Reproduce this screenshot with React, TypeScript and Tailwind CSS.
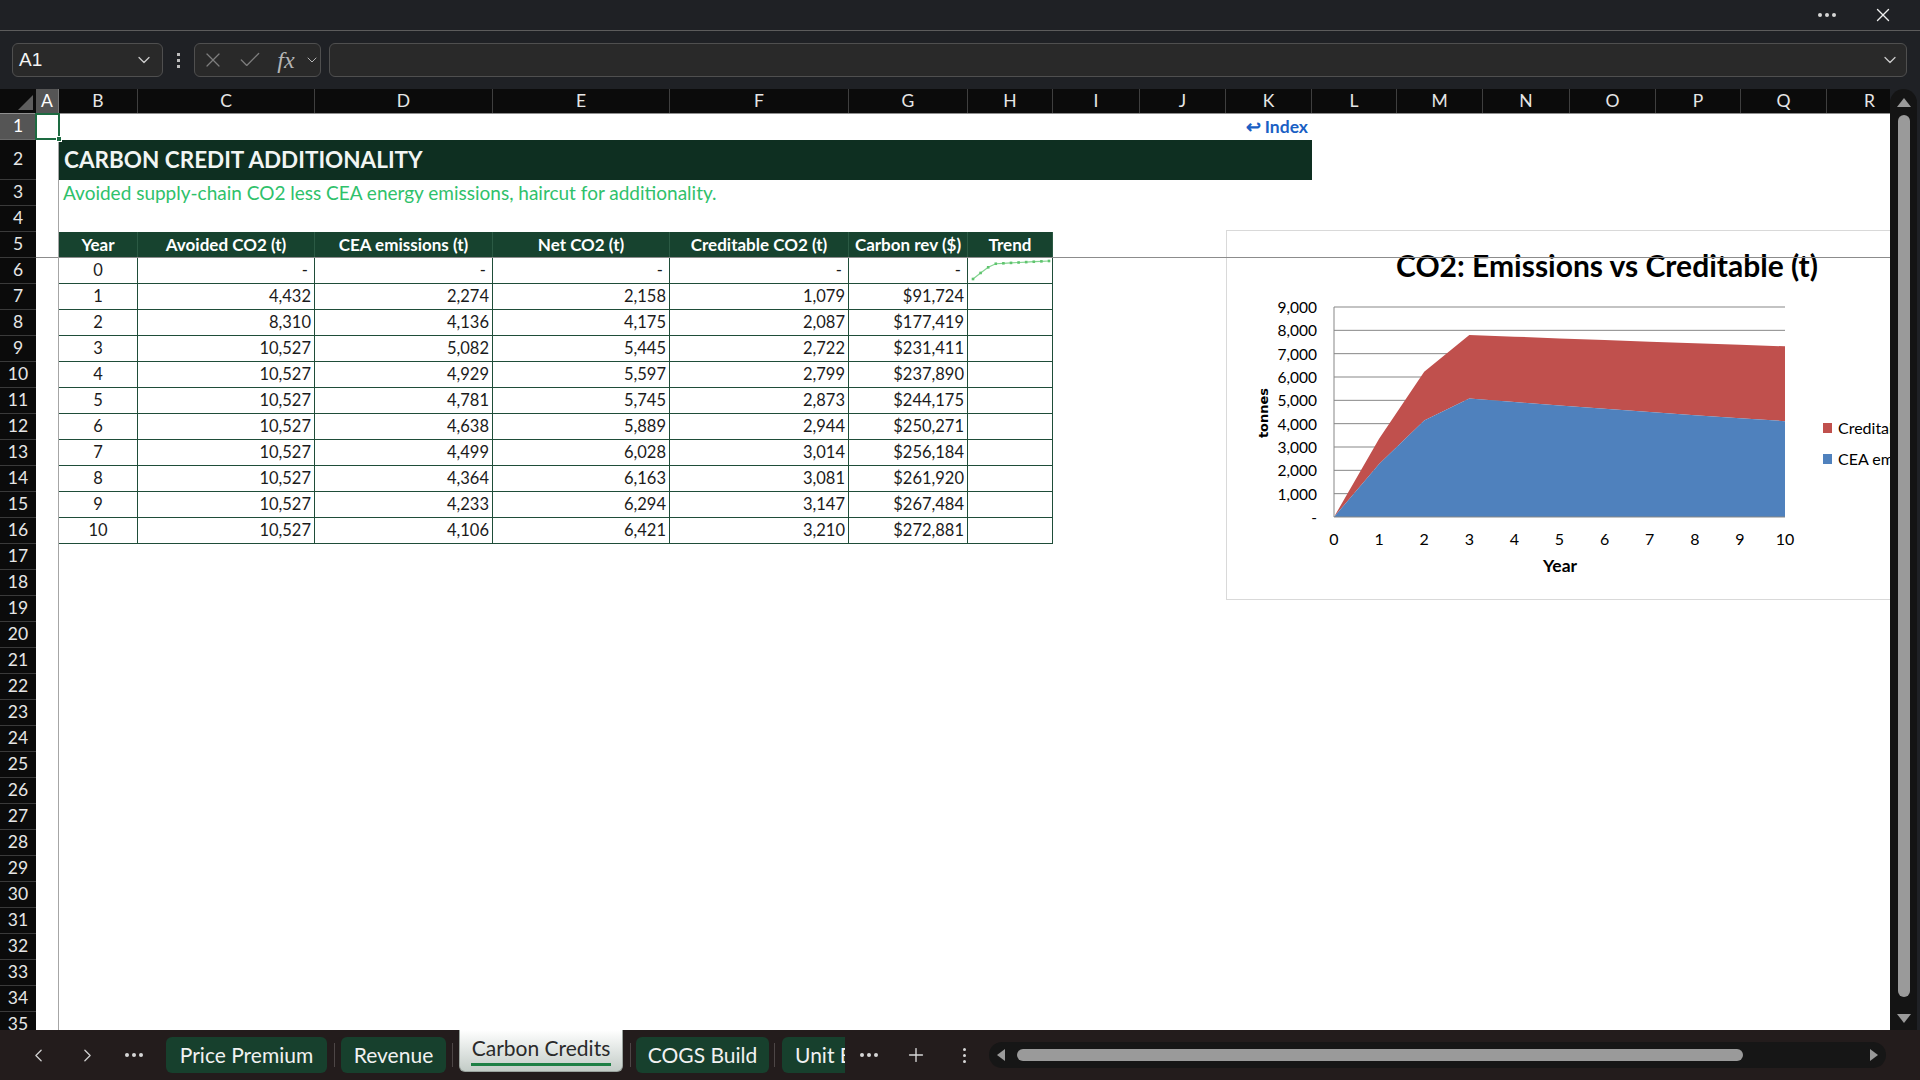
import React from 'react';
import { X, Check, ChevronDown, ChevronLeft, ChevronRight, Plus } from 'lucide-react';

const COLS = [
  { k: 'A', w: 'w-[23px]' },
  { k: 'B', w: 'w-[79px]' },
  { k: 'C', w: 'w-[177px]' },
  { k: 'D', w: 'w-[178px]' },
  { k: 'E', w: 'w-[177px]' },
  { k: 'F', w: 'w-[179px]' },
  { k: 'G', w: 'w-[119px]' },
  { k: 'H', w: 'w-[85px]' },
  { k: 'I', w: 'w-[87px]' },
  { k: 'J', w: 'w-[86px]' },
  { k: 'K', w: 'w-[86px]' },
  { k: 'L', w: 'w-[85px]' },
  { k: 'M', w: 'w-[86px]' },
  { k: 'N', w: 'w-[87px]' },
  { k: 'O', w: 'w-[86px]' },
  { k: 'P', w: 'w-[85px]' },
  { k: 'Q', w: 'w-[86px]' },
  { k: 'R', w: 'w-[86px]' },
];

const DATA: string[][] = [
  ['0', '-', '-', '-', '-', '-'],
  ['1', '4,432', '2,274', '2,158', '1,079', '$91,724'],
  ['2', '8,310', '4,136', '4,175', '2,087', '$177,419'],
  ['3', '10,527', '5,082', '5,445', '2,722', '$231,411'],
  ['4', '10,527', '4,929', '5,597', '2,799', '$237,890'],
  ['5', '10,527', '4,781', '5,745', '2,873', '$244,175'],
  ['6', '10,527', '4,638', '5,889', '2,944', '$250,271'],
  ['7', '10,527', '4,499', '6,028', '3,014', '$256,184'],
  ['8', '10,527', '4,364', '6,163', '3,081', '$261,920'],
  ['9', '10,527', '4,233', '6,294', '3,147', '$267,484'],
  ['10', '10,527', '4,106', '6,421', '3,210', '$272,881'],
];

const CEA = [0, 2274, 4136, 5082, 4929, 4781, 4638, 4499, 4364, 4233, 4106];
const CRED = [0, 1079, 2087, 2722, 2799, 2873, 2944, 3014, 3081, 3147, 3210];

function RowHead({ n, active }: { n: number; active?: boolean }) {
  return (
    <div
      className={
        'w-[36px] shrink-0 h-full border-b flex items-center justify-center text-[17.5px] ' +
        (active ? 'bg-[#555555] text-white border-[#6a6a6a]' : 'bg-[#0b0b0b] text-[#e6e6e6] border-[#3a3a3a]')
      }
    >
      {n}
    </div>
  );
}

function Row({ n, tall, active, children }: { n: number; tall?: boolean; active?: boolean; children?: React.ReactNode }) {
  return (
    <div className={'flex shrink-0 ' + (tall ? 'h-[40px]' : 'h-[26px]')}>
      <RowHead n={n} active={active} />
      <div className="flex-1 h-full bg-white flex">{children}</div>
    </div>
  );
}

function Sparkline() {
  const pts = CRED.map((v, i) => [5 + i * 7.6, 21 - (v / 3210) * 18]);
  return (
    <svg width="84" height="25" viewBox="0 0 84 25" className="block">
      <polyline points={pts.map((p) => p.join(',')).join(' ')} fill="none" stroke="#82d48f" strokeWidth="1.2" />
      {pts.map((p, i) => (
        <rect key={i} x={p[0] - 1.3} y={p[1] - 1.3} width="2.6" height="2.6" fill="#5fc46e" />
      ))}
    </svg>
  );
}

function Chart() {
  const px = (i: number) => 107 + i * 45.1;
  const py = (v: number) => 286 - (v * 210) / 9000;
  const blue = CEA.map((v, i) => `${px(i)},${py(v)}`);
  const top = CEA.map((v, i) => `${px(i)},${py(v + CRED[i])}`);
  const bluePoly = [`${px(0)},286`, ...blue, `${px(10)},286`].join(' ');
  const redPoly = [...top, ...blue.slice().reverse()].join(' ');
  return (
    <div className="absolute left-[1226px] top-[141px] w-[760px] h-[370px] bg-white border border-[#d9d9d9] z-10">
      <svg width="760" height="370" viewBox="0 0 760 370" className="absolute left-0 top-0">
        {[1, 2, 3, 4, 5, 6, 7, 8, 9].map((v) => (
          <line key={v} x1="107" x2="558" y1={py(v * 1000)} y2={py(v * 1000)} stroke="#878787" strokeWidth="1" />
        ))}
        <polygon points={redPoly} fill="#c0504d" />
        <polygon points={bluePoly} fill="#4f81bd" />
        <line x1="107" x2="107" y1="76" y2="286" stroke="#878787" strokeWidth="1" />
        <line x1="107" x2="558" y1="286" y2="286" stroke="#878787" strokeWidth="1" />
        {[0, 1, 2, 3, 4, 5, 6, 7, 8, 9].map((v) => (
          <text key={v} x="90" y={py(v * 1000)} textAnchor="end" dominantBaseline="central" fontFamily="Lato, sans-serif" fontSize="15.5" fill="#000">
            {v === 0 ? '-' : `${v},000`}
          </text>
        ))}
        {[0, 1, 2, 3, 4, 5, 6, 7, 8, 9, 10].map((i) => (
          <text key={i} x={px(i)} y="307" textAnchor="middle" dominantBaseline="central" fontFamily="Lato, sans-serif" fontSize="16" fill="#000">
            {i}
          </text>
        ))}
        <text x="333" y="334" textAnchor="middle" dominantBaseline="central" fontFamily="Lato, sans-serif" fontWeight="700" fontSize="17.5" fill="#000">
          Year
        </text>
        <text x="36" y="182" textAnchor="middle" dominantBaseline="central" fontFamily="DejaVu Sans, sans-serif" fontWeight="700" fontSize="13" fill="#000" transform="rotate(-90 36 182)">
          tonnes
        </text>
      </svg>
      <div className="absolute left-0 w-[760px] top-[16px] flex justify-center">
        <span className="text-[30px] font-bold text-black leading-[36px] whitespace-nowrap">CO2: Emissions vs Creditable (t)</span>
      </div>
      <div className="absolute left-[596px] top-[187px] flex flex-col gap-[11px]">
        <div className="flex items-center gap-[6px] h-[20px]">
          <div className="w-[9px] h-[10px] bg-[#c0504d]" />
          <span className="text-[16px] text-black whitespace-nowrap">Creditable CO2 (t)</span>
        </div>
        <div className="flex items-center gap-[6px] h-[20px]">
          <div className="w-[9px] h-[10px] bg-[#4f81bd]" />
          <span className="text-[16px] text-black whitespace-nowrap">CEA emissions (t)</span>
        </div>
      </div>
    </div>
  );
}

const HEADERS = ['Year', 'Avoided CO2 (t)', 'CEA emissions (t)', 'Net CO2 (t)', 'Creditable CO2 (t)', 'Carbon rev ($)', 'Trend'];
const TW = ['w-[79px]', 'w-[177px]', 'w-[178px]', 'w-[177px]', 'w-[179px]', 'w-[119px]', 'w-[85px]'];

function Sheet() {
  const rows: React.ReactNode[] = [];
  rows.push(
    <Row key={1} n={1} active>
      <div className="w-[23px] shrink-0" />
      <div className="w-[1253px] shrink-0 flex items-center justify-end pr-[4px] text-[#1a5fc4] font-bold text-[17.5px]">
        ↩ Index
      </div>
    </Row>
  );
  rows.push(
    <Row key={2} n={2} tall>
      <div className="w-[23px] shrink-0" />
      <div className="w-[1253px] shrink-0 h-full bg-[#0e2f21] flex items-center pl-[5px] text-[#f2f5f3] font-bold text-[22.5px]">
        CARBON CREDIT ADDITIONALITY
      </div>
    </Row>
  );
  rows.push(
    <Row key={3} n={3}>
      <div className="w-[23px] shrink-0" />
      <div className="flex items-center pl-[4px] text-[#2fc16b] text-[19px] whitespace-nowrap">
        Avoided supply-chain CO2 less CEA energy emissions, haircut for additionality.
      </div>
    </Row>
  );
  rows.push(<Row key={4} n={4} />);
  rows.push(
    <Row key={5} n={5}>
      <div className="w-[23px] shrink-0" />
      {HEADERS.map((h, i) => (
        <div
          key={h}
          className={TW[i] + ' shrink-0 h-full bg-[#17432f] border-r border-[#2b5a44] flex items-center justify-center text-white font-bold text-[17px] whitespace-nowrap'}
        >
          {h}
        </div>
      ))}
    </Row>
  );
  DATA.forEach((d, r) => {
    rows.push(
      <Row key={6 + r} n={6 + r}>
        <div className="w-[23px] shrink-0" />
        {d.map((v, i) => (
          <div
            key={i}
            className={
              TW[i] +
              ' shrink-0 h-full border-r border-b border-[#1f4d39] flex items-center text-[#1b1b1b] text-[16.5px] ' +
              (i === 0 ? 'justify-center' : v === '-' ? 'justify-end pr-[6px]' : 'justify-end pr-[3px]')
            }
          >
            {v}
          </div>
        ))}
        <div className="w-[85px] shrink-0 h-full border-r border-b border-[#1f4d39] flex items-center">{r === 0 ? <Sparkline /> : null}</div>
      </Row>
    );
  });
  for (let n = 17; n <= 35; n++) rows.push(<Row key={n} n={n} />);

  return (
    <div className="relative w-[1890px] h-[941px] overflow-hidden bg-white shrink-0">
      <div className="flex h-[25px] bg-[#0b0b0b] border-b border-[#8f8f8f] box-border">
        <div className="w-[36px] shrink-0 relative">
          <div className="absolute right-[3px] bottom-[3px] w-0 h-0 border-l-[15px] border-l-transparent border-b-[15px] border-b-[#5e5e5e]" />
        </div>
        {COLS.map((c) => (
          <div
            key={c.k}
            className={
              c.w +
              ' shrink-0 h-full flex items-center justify-center text-[17.5px] border-r ' +
              (c.k === 'A' ? 'bg-[#555555] text-white border-[#777777]' : 'text-[#e6e6e6] border-[#3f3f3f]')
            }
          >
            {c.k}
          </div>
        ))}
      </div>
      {rows}
      <Chart />
      <div className="absolute left-[36px] right-0 top-[168px] h-px bg-[#8c8c8c] z-20" />
      <div className="absolute left-[58px] top-[25px] bottom-0 w-px bg-[#a6a6a6] z-20" />
      <div className="absolute left-[35px] top-[24px] w-[25px] h-[27px] border-2 border-[#1d6b41] z-30">
        <div className="absolute right-[-4px] bottom-[-4px] w-[6px] h-[6px] bg-[#1d6b41] border border-white" />
      </div>
    </div>
  );
}

function VScroll() {
  return (
    <div className="w-[30px] h-[941px] shrink-0 bg-[#1f2125] flex justify-start">
      <div className="w-[27px] h-full bg-[#141414] rounded-t-[14px] flex flex-col items-center pt-[9px]">
        <div className="w-0 h-0 border-l-[7px] border-l-transparent border-r-[7px] border-r-transparent border-b-[9px] border-b-[#9a9a9a]" />
        <div className="w-[12px] h-[882px] mt-[8px] bg-[#9a9a9a] rounded-full" />
        <div className="mt-[17px] w-0 h-0 border-l-[7px] border-l-transparent border-r-[7px] border-r-transparent border-t-[9px] border-t-[#9a9a9a]" />
      </div>
    </div>
  );
}

function Tab({ label, w }: { label: string; w: string }) {
  return (
    <div className={w + ' shrink-0 h-[36px] bg-[#17402d] rounded-[6px] flex items-center justify-center text-[21px] text-[#f1f1f1] whitespace-nowrap'}>
      {label}
    </div>
  );
}

function Sep() {
  return <div className="w-px h-[24px] bg-[#4d4646] shrink-0" />;
}

function Dots() {
  return (
    <div className="flex gap-[3px]">
      <div className="w-[4px] h-[4px] rounded-full bg-[#d6d6d6]" />
      <div className="w-[4px] h-[4px] rounded-full bg-[#d6d6d6]" />
      <div className="w-[4px] h-[4px] rounded-full bg-[#d6d6d6]" />
    </div>
  );
}

function TabBar() {
  return (
    <div className="h-[50px] bg-[#231c1c] flex items-center shrink-0">
      <div className="w-[26px] shrink-0" />
      <div className="w-[24px] flex justify-center text-[#cfcfcf]"><ChevronLeft size={21} strokeWidth={1.5} /></div>
      <div className="w-[25px] shrink-0" />
      <div className="w-[24px] flex justify-center text-[#cfcfcf]"><ChevronRight size={21} strokeWidth={1.5} /></div>
      <div className="w-[23px] shrink-0" />
      <div className="w-[24px] flex justify-center"><Dots /></div>
      <div className="w-[20px] shrink-0" />
      <Tab label="Price Premium" w="w-[161px]" />
      <div className="w-[7px] shrink-0" />
      <Sep />
      <div className="w-[6px] shrink-0" />
      <Tab label="Revenue" w="w-[105px]" />
      <div className="w-[6px] shrink-0" />
      <Sep />
      <div className="w-[6px] shrink-0" />
      <div className="w-[164px] h-[42px] self-start shrink-0 rounded-b-[6px] bg-gradient-to-b from-white to-[#c3ccc7] border-x border-b border-[#9aa39e] flex flex-col items-center justify-center relative">
        <span className="text-[21px] text-[#2a2a2a] whitespace-nowrap -mt-[5px]">Carbon Credits</span>
        <div className="absolute left-[11px] right-[11px] bottom-[5px] h-[3px] bg-[#1e7f45]" />
      </div>
      <div className="w-[7px] shrink-0" />
      <Sep />
      <div className="w-[5px] shrink-0" />
      <Tab label="COGS Build" w="w-[133px]" />
      <div className="w-[5px] shrink-0" />
      <Sep />
      <div className="w-[7px] shrink-0" />
      <div className="w-[63px] h-[36px] shrink-0 bg-[#17402d] rounded-l-[6px] overflow-hidden flex items-center pl-[13px] text-[21px] text-[#f1f1f1] whitespace-nowrap">
        Unit Economics
      </div>
      <div className="w-[12px] shrink-0" />
      <div className="w-[24px] flex justify-center"><Dots /></div>
      <div className="w-[23px] shrink-0" />
      <div className="w-[24px] flex justify-center text-[#d6d6d6]"><Plus size={22} strokeWidth={1.5} /></div>
      <div className="w-[24px] shrink-0" />
      <div className="w-[24px] flex justify-center">
        <div className="flex flex-col gap-[3px]">
          <div className="w-[3px] h-[3px] rounded-full bg-[#d6d6d6]" />
          <div className="w-[3px] h-[3px] rounded-full bg-[#d6d6d6]" />
          <div className="w-[3px] h-[3px] rounded-full bg-[#d6d6d6]" />
        </div>
      </div>
      <div className="w-[13px] shrink-0" />
      <div className="w-[897px] h-[26px] shrink-0 bg-[#161616] rounded-[13px] flex items-center px-[8px]">
        <div className="w-0 h-0 border-t-[6px] border-t-transparent border-b-[6px] border-b-transparent border-r-[8px] border-r-[#9a9a9a]" />
        <div className="w-[726px] h-[12px] ml-[12px] bg-[#9a9a9a] rounded-full" />
        <div className="flex-1" />
        <div className="w-0 h-0 border-t-[6px] border-t-transparent border-b-[6px] border-b-transparent border-l-[8px] border-l-[#9a9a9a]" />
      </div>
    </div>
  );
}

export default function App() {
  return (
    <div className="w-[1920px] h-[1080px] overflow-hidden bg-[#1f2125] flex flex-col font-[Lato,sans-serif]">
      <div className="h-[31px] shrink-0 border-b border-[#5c5c5c] box-border flex items-center justify-end pr-[26px]">
        <div className="mr-[36px]"><Dots /></div>
        <X size={22} strokeWidth={1.5} className="text-[#eeeeee]" />
      </div>
      <div className="h-[58px] shrink-0 flex items-start pt-[12px]">
        <div className="ml-[12px] w-[151px] h-[34px] shrink-0 bg-[#292929] border border-[#4f4f4f] rounded-[6px] flex items-center pl-[6px] pr-[8px]">
          <span className="text-[#f4f4f4] text-[19px] font-[Liberation_Sans,sans-serif]">A1</span>
          <div className="flex-1" />
          <ChevronDown size={20} strokeWidth={1.5} className="text-[#cccccc]" />
        </div>
        <div className="w-[31px] h-[34px] shrink-0 flex items-center justify-center">
          <div className="flex flex-col gap-[3px]">
            <div className="w-[3px] h-[3px] bg-[#bdbdbd]" />
            <div className="w-[3px] h-[3px] bg-[#bdbdbd]" />
            <div className="w-[3px] h-[3px] bg-[#bdbdbd]" />
          </div>
        </div>
        <div className="w-[127px] h-[34px] shrink-0 bg-[#292929] border border-[#4f4f4f] rounded-[6px] flex items-center">
          <div className="w-[36px] flex justify-center text-[#7d7d7d]"><X size={24} strokeWidth={1.2} /></div>
          <div className="w-[37px] flex justify-center text-[#7d7d7d]"><Check size={26} strokeWidth={1.2} /></div>
          <div className="w-[36px] flex justify-center text-[#b5b5b5] italic text-[24px] leading-[30px] font-[Liberation_Serif,serif]">fx</div>
          <div className="w-[16px] flex justify-center text-[#b5b5b5]"><ChevronDown size={16} strokeWidth={1.5} /></div>
        </div>
        <div className="ml-[8px] w-[1578px] h-[34px] shrink-0 bg-[#292929] border border-[#4f4f4f] rounded-[6px] flex items-center justify-end pr-[6px]">
          <ChevronDown size={20} strokeWidth={1.5} className="text-[#cccccc]" />
        </div>
      </div>
      <div className="flex h-[941px] shrink-0">
        <Sheet />
        <VScroll />
      </div>
      <TabBar />
    </div>
  );
}
